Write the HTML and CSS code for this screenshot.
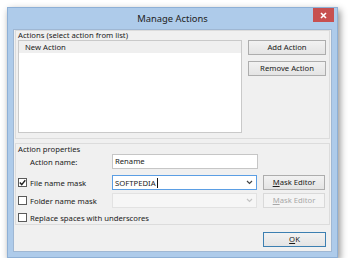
FILE: index.html
```html
<!DOCTYPE html>
<html lang="en">
<head>
  <meta charset="UTF-8">
  <title>Manage Actions</title>
  <link rel="stylesheet" href="styles.css">
</head>
<body>
  <div class="window">
    <div class="titlebar">
      <span class="title">Manage Actions</span>
      <span class="close-btn">
        <svg width="7" height="7" viewBox="0 0 7 7"><path d="M1 1 L6 6 M6 1 L1 6" stroke="#fff" stroke-width="1.6"/></svg>
      </span>
    </div>

    <div class="client">
      <div class="group group-actions">
        <div class="group-label">Actions (select action from list)</div>
        <div class="actions-row">
          <div class="action-list">
            <div class="list-item">New Action</div>
          </div>
          <div class="side-buttons">
            <button class="btn">Add Action</button>
            <button class="btn">Remove Action</button>
          </div>
        </div>
      </div>

      <div class="group group-props">
        <div class="group-label">Action properties</div>

        <div class="prop-row row-name">
          <span class="prop-label indent">Action name:</span>
          <div class="textbox">Rename</div>
        </div>

        <div class="prop-row row-file">
          <span class="prop-label">
            <span class="checkbox">
              <svg width="7" height="7" viewBox="0 0 7 7"><path d="M0.8 3.6 L2.7 5.6 L6.3 1.2" fill="none" stroke="#222" stroke-width="1.4"/></svg>
            </span>
            File name mask
          </span>
          <div class="combo focused">
            <span class="combo-text">SOFTPEDIA<span class="caret"></span></span>
            <svg class="chevron" width="7" height="5" viewBox="0 0 7 5"><path d="M1 1 L3.5 3.5 L6 1" fill="none" stroke="#444" stroke-width="1.2"/></svg>
          </div>
          <button class="btn btn-mask"><u>M</u>ask Editor</button>
        </div>

        <div class="prop-row row-folder">
          <span class="prop-label">
            <span class="checkbox"></span>
            Folder name mask
          </span>
          <div class="combo disabled">
            <span class="combo-text"></span>
            <svg class="chevron" width="7" height="5" viewBox="0 0 7 5"><path d="M1 1 L3.5 3.5 L6 1" fill="none" stroke="#c4c4c4" stroke-width="1.2"/></svg>
          </div>
          <button class="btn btn-mask" disabled><u>M</u>ask Editor</button>
        </div>

        <div class="prop-row row-replace">
          <span class="prop-label">
            <span class="checkbox"></span>
            Replace spaces with underscores
          </span>
        </div>
      </div>

      <div class="footer">
        <button class="btn btn-ok"><u>O</u>K</button>
      </div>
    </div>
  </div>
</body>
</html>
```

FILE: styles.css
```css
* {
  margin: 0;
  padding: 0;
  box-sizing: border-box;
}

body {
  background: #ffffff;
  padding: 7px 0 0 7px;
  font-family: 'Noto Sans', 'Open Sans', sans-serif;
  font-size: 7.7px;
  color: #1a1a1a;
}

.window {
  width: 331px;
  height: 251px;
  background: #aecbea;
  border: 1px solid #8eb0d6;
  padding: 0 5px 5px 5px;
  display: flex;
  flex-direction: column;
  box-shadow: 2px 3px 7px rgba(0, 0, 0, 0.45);
}

.titlebar {
  height: 21px;
  display: flex;
  align-items: flex-start;
  justify-content: center;
  position: relative;
}

.title {
  font-size: 9.4px;
  color: #222;
  line-height: 21px;
}

.close-btn {
  position: absolute;
  right: -2px;
  top: 0;
  width: 21px;
  height: 14px;
  background: #c75050;
  display: flex;
  align-items: center;
  justify-content: center;
}

.client {
  flex: 1;
  background: #f0f0f0;
  border: 1px solid #9fb7d3;
  padding: 0 1px;
  display: flex;
  flex-direction: column;
}

.group {
  border: 1px solid #dcdcdc;
  padding: 0 2px;
}

.group-label {
  height: 9px;
  line-height: 9px;
}

/* actions list */
.group-actions {
  height: 109px;
}

.actions-row {
  display: flex;
  gap: 6px;
}

.action-list {
  width: 224px;
  height: 93px;
  background: #ffffff;
  border: 1px solid #c9c9c9;
}

.list-item {
  height: 12px;
  line-height: 12px;
  background: #efefef;
  padding-left: 6px;
}

.side-buttons {
  display: flex;
  flex-direction: column;
  gap: 6px;
}

.btn {
  font-family: inherit;
  font-size: 7.7px;
  color: #1a1a1a;
  background: linear-gradient(#f2f2f2, #e4e4e4);
  border: 1px solid #adadad;
  height: 15px;
  width: 78px;
  line-height: 13px;
}

.btn:disabled {
  color: #a8a8a8;
  background: #f4f4f4;
  border-color: #d9d9d9;
}

/* properties */
.group-props {
  margin-top: 4px;
  height: 82px;
}

.group-props .group-label {
  margin-top: 1px;
}

.prop-row {
  display: flex;
  align-items: center;
}

.prop-label {
  width: 94px;
  display: flex;
  align-items: center;
  gap: 3px;
}

.prop-label.indent {
  padding-left: 12px;
}

.row-name {
  height: 15px;
}

.row-file {
  margin-top: 6px;
  height: 15px;
}

.row-folder {
  margin-top: 3px;
  height: 15px;
}

.row-replace {
  margin-top: 5px;
  height: 9px;
}

.row-replace .prop-label {
  width: auto;
}

.textbox {
  width: 146px;
  height: 15px;
  background: #ffffff;
  border: 1px solid #c6c6c6;
  padding-left: 2px;
  line-height: 13px;
}

.checkbox {
  width: 9px;
  height: 9px;
  border: 1px solid #5a5a5a;
  background: #ffffff;
  display: flex;
  align-items: center;
  justify-content: center;
}

.combo {
  width: 145px;
  height: 15px;
  background: #ffffff;
  border: 1px solid #c6c6c6;
  display: flex;
  align-items: center;
  justify-content: space-between;
  padding: 0 3px 0 2px;
  margin-right: 6px;
}

.combo.focused {
  border-color: #5b9ee4;
}

.combo.disabled {
  background: #f6f6f6;
  border-color: #e2e2e2;
}

.combo-text {
  display: flex;
  align-items: center;
}

.caret {
  width: 1px;
  height: 10px;
  background: #111;
  margin-left: 1px;
}

.btn-mask {
  width: 62px;
}

.btn-ok {
  width: 63px;
  border-color: #3c7fb1;
}

.footer {
  display: flex;
  justify-content: flex-end;
  padding: 7px 4px 0 0;
}
```
